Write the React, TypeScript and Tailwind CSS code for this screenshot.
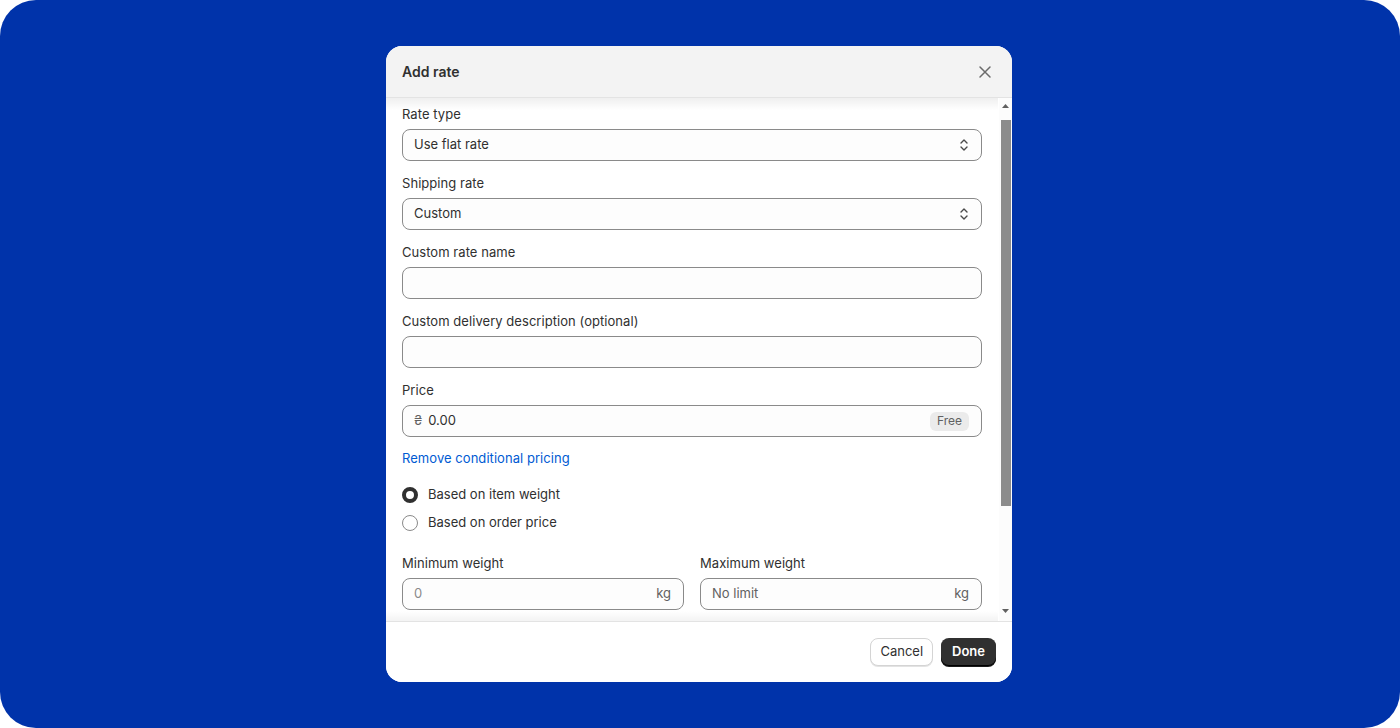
import React from "react";

const font = { fontFamily: "Inter, 'Noto Sans', sans-serif" };

function SelectChevron() {
  return (
    <svg width="10" height="16" viewBox="0 0 10 16" fill="none" stroke="#4a4a4a" strokeWidth="1.4" strokeLinecap="round" strokeLinejoin="round">
      <path d="M2 6 L5 3 L8 6" />
      <path d="M2 10 L5 13 L8 10" />
    </svg>
  );
}

function Label({ children }: { children: React.ReactNode }) {
  return <div className="h-5 leading-5 text-[13px] text-[#303030] mb-[5px] tracking-[0.05px]">{children}</div>;
}

function Field({ children }: { children: React.ReactNode }) {
  return (
    <div className="h-8 rounded-lg border border-[#8a8a8a] bg-[#fdfdfd] flex items-center pl-[11px] pr-3 text-[13px] text-[#303030]">
      {children}
    </div>
  );
}

export default function App() {
  return (
    <div className="w-[1400px] h-[728px] bg-white" style={font}>
      <div className="w-full h-full rounded-[36px] bg-[#0033aa] flex items-start justify-center pt-[46px] pr-[2px]">
        <div className="w-[626px] h-[636px] bg-white rounded-2xl overflow-hidden flex flex-col">
          {/* Header */}
          <div className="h-[52px] shrink-0 bg-[#f3f3f3] border-b border-[#e3e3e3] flex items-center justify-between pl-4 pr-[20px]">
            <div className="text-[14px] font-semibold text-[#303030]">Add rate</div>
            <svg width="14" height="14" viewBox="0 0 14 14" stroke="#6b6b6b" strokeWidth="1.5" strokeLinecap="round">
              <path d="M2 2 L12 12 M12 2 L2 12" />
            </svg>
          </div>

          {/* Body */}
          <div className="relative flex-1 flex min-h-0">
            <div className="absolute left-0 right-[14px] top-0 h-3 bg-gradient-to-b from-[#00000010] to-transparent pointer-events-none" />
            <div className="absolute left-0 right-[14px] bottom-0 h-[10px] bg-gradient-to-t from-[#0000000c] to-transparent pointer-events-none" />
            <div className="flex-1 overflow-hidden pl-4 pr-[17px] pt-[6px]">
              <Label>Rate type</Label>
              <Field>
                <span className="flex-1">Use flat rate</span>
                <SelectChevron />
              </Field>
              <div className="h-3" />
              <Label>Shipping rate</Label>
              <Field>
                <span className="flex-1">Custom</span>
                <SelectChevron />
              </Field>
              <div className="h-3" />
              <Label>Custom rate name</Label>
              <Field>
                <span />
              </Field>
              <div className="h-3" />
              <Label>Custom delivery description (optional)</Label>
              <Field>
                <span />
              </Field>
              <div className="h-3" />
              <Label>Price</Label>
              <div className="h-8 rounded-lg border border-[#8a8a8a] bg-[#fdfdfd] flex items-center pl-[11px] pr-3 text-[13px]">
                <span className="text-[#616161] mr-[6px]">₴</span>
                <span className="flex-1 text-[#303030]">0.00</span>
                <span className="h-[19px] px-[7px] rounded-md bg-[#ebebeb] text-[12px] text-[#616161] flex items-center">Free</span>
              </div>
              <div className="h-[11px]" />
              <div className="h-5 leading-5 text-[13px] text-[#005bd3] tracking-[0.05px]">Remove conditional pricing</div>
              <div className="h-[17px]" />
              <div className="flex flex-col gap-2">
                <div className="h-5 flex items-center gap-[10px]">
                  <span className="w-4 h-4 rounded-full border-[4px] border-[#303030] bg-white" />
                  <span className="text-[13px] text-[#303030]">Based on item weight</span>
                </div>
                <div className="h-5 flex items-center gap-[10px]">
                  <span className="w-4 h-4 rounded-full border border-[#8a8a8a] bg-white" />
                  <span className="text-[13px] text-[#303030]">Based on order price</span>
                </div>
              </div>
              <div className="h-5" />
              <div className="grid grid-cols-2 gap-4">
                <div>
                  <Label>Minimum weight</Label>
                  <Field>
                    <span className="flex-1 text-[#8a8a8a]">0</span>
                    <span className="text-[#616161]">kg</span>
                  </Field>
                </div>
                <div>
                  <Label>Maximum weight</Label>
                  <Field>
                    <span className="flex-1 text-[#616161]">No limit</span>
                    <span className="text-[#616161]">kg</span>
                  </Field>
                </div>
              </div>
            </div>
            {/* Scrollbar */}
            <div className="w-[13px] shrink-0 flex flex-col items-center bg-[#fcfcfc]">
              <div className="h-[22px] w-full flex items-start justify-center pt-[6px]">
                <svg width="7" height="4" viewBox="0 0 7 4"><path d="M0 4 L3.5 0 L7 4 Z" fill="#606060" /></svg>
              </div>
              <div className="w-[10px] h-[386px] bg-[#8c8c8c]" />
              <div className="flex-1" />
              <div className="h-[14px] w-full flex items-start justify-center pt-[2px]">
                <svg width="7" height="4" viewBox="0 0 7 4"><path d="M0 0 L3.5 4 L7 0 Z" fill="#606060" /></svg>
              </div>
            </div>
          </div>

          {/* Footer */}
          <div className="h-[61px] shrink-0 border-t border-[#e3e3e3] bg-white flex items-center justify-end gap-2 pr-4">
            <button className="h-[28px] px-[9px] rounded-lg border border-[#d4d4d4] bg-white text-[13px] text-[#303030] shadow-[0_1px_0_#e3e3e3]">
              Cancel
            </button>
            <button className="h-[28px] px-[11px] rounded-lg bg-[#303030] text-[13px] font-semibold text-white shadow-[inset_0_-1px_0_#000,0_1px_0_#1a1a1a]">
              Done
            </button>
          </div>
        </div>
      </div>
    </div>
  );
}
